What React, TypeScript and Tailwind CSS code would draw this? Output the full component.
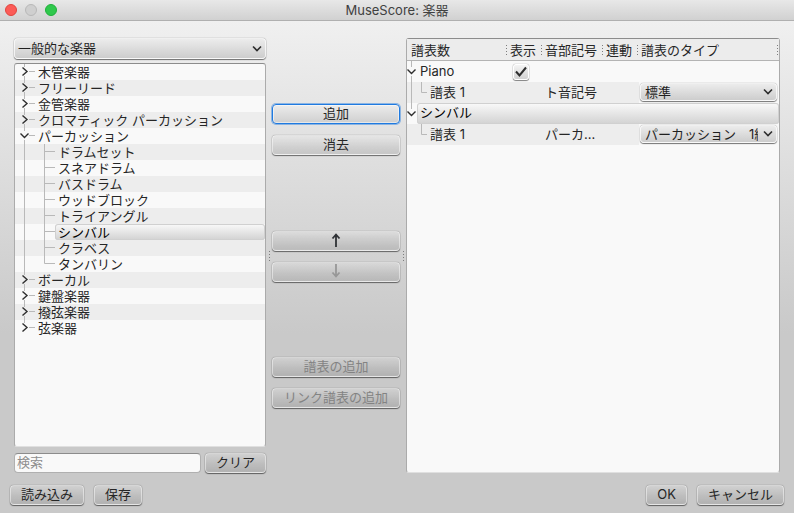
import type { ReactNode } from "react";
import clsx from "clsx";

interface Instrument {
    name: string;
    children?: string[];
}

const INSTRUMENTS: Instrument[] = [
    { name: "木管楽器" },
    { name: "フリーリード" },
    { name: "金管楽器" },
    { name: "クロマティック パーカッション" },
    {
        name: "パーカッション",
        children: [
            "ドラムセット",
            "スネアドラム",
            "バスドラム",
            "ウッドブロック",
            "トライアングル",
            "シンバル",
            "クラベス",
            "タンバリン",
        ],
    },
    { name: "ボーカル" },
    { name: "鍵盤楽器" },
    { name: "撥弦楽器" },
    { name: "弦楽器" },
];

const SELECTED = "シンバル";

const BUTTON =
    "h-5 rounded-[4px] border border-white/45 bg-linear-to-b from-white/15 to-black/10 px-2.5 pb-0.5 text-[13px] leading-4 text-[#262626] whitespace-nowrap shadow-[0_1px_1px_rgba(0,0,0,0.5),0_0_1px_rgba(0,0,0,0.5)] disabled:text-[#838383]";

const BUTTON_FOCUSED =
    "h-5 rounded-[4px] border border-[#1f7ae0] bg-linear-to-b from-[#ececec] to-[#cfcfcf] px-2.5 pb-0.5 text-[13px] leading-4 text-[#262626] whitespace-nowrap ring-1 ring-[#1f7ae0]/45 inset-ring inset-ring-white/50";

function Button({ children, className, disabled, focused, label }: {
    children: ReactNode;
    className?: string;
    disabled?: boolean;
    focused?: boolean;
    label?: string;
}) {
    return (
        <button
            type="button"
            disabled={disabled}
            aria-label={label}
            className={clsx(focused ? BUTTON_FOCUSED : BUTTON, className)}
        >
            {children}
        </button>
    );
}

function Dots() {
    return (
        <svg width="3" height="10" viewBox="0 0 3 10" className="shrink-0" aria-hidden="true">
            {[0, 3, 6, 9].map((y) => (
                <rect key={y} x="1" y={y} width="1" height="1" fill="#7d7d7d" />
            ))}
        </svg>
    );
}

function Splitter() {
    return (
        <div role="separator" aria-orientation="vertical" className="flex w-1.5 shrink-0 items-center justify-center">
            <Dots />
        </div>
    );
}

function ComboBox({ label, options, small }: { label: string; options: string[]; small?: boolean }) {
    return (
        <div className="relative">
            <select
                aria-label={label}
                className={clsx(
                    "block w-full appearance-none overflow-hidden rounded-[4px] border border-white/70 bg-linear-to-b from-[#ececec] to-[#cdcdcd] pr-[18px] text-[13px] leading-4 text-[#1f1f1f] shadow-[0_1px_1px_rgba(0,0,0,0.5),0_0_1px_rgba(0,0,0,0.6)]",
                    small ? "h-[18px] pl-1" : "h-[21px] pb-0.5 pl-[3px]"
                )}
            >
                {options.map((o) => (
                    <option key={o}>{o}</option>
                ))}
            </select>
            <svg
                width="10"
                height="7"
                viewBox="0 0 10 7"
                className="pointer-events-none absolute top-1/2 right-1 -translate-y-1/2"
                aria-hidden="true"
            >
                <path d="M1 1l4 4 4-4" fill="none" stroke="#2e2e2e" strokeWidth="1.6" />
            </svg>
        </div>
    );
}

/* Trunk line with an expand arrow for top level rows */
function RootBranch({ open, last }: { open: boolean; last: boolean }) {
    return (
        <svg width="20" height="16" viewBox="0 0 20 16" className="shrink-0" fill="none" aria-hidden="true">
            <path d={last ? "M9.5 0v3M14 7.5h6" : "M9.5 0v3M9.5 12v4M14 7.5h6"} stroke="#b9b9b9" />
            <path d={open ? "M5.5 5.5l4 4 4-4" : "M7.5 3.5l4.5 4-4.5 4"} stroke="#2e2e2e" strokeWidth="1.4" />
        </svg>
    );
}

function ChildBranch({ last }: { last: boolean }) {
    return (
        <svg width="40" height="16" viewBox="0 0 40 16" className="shrink-0" fill="none" aria-hidden="true">
            <path d={last ? "M9.5 0v16M29.5 0v7.5H40" : "M9.5 0v16M29.5 0v16M29.5 7.5H40"} stroke="#b9b9b9" />
        </svg>
    );
}

function InstrumentTree() {
    const rows = INSTRUMENTS.flatMap((item, i) => [
        {
            name: item.name,
            level: 1,
            branch: <RootBranch open={!!item.children} last={i === INSTRUMENTS.length - 1} />,
        },
        ...(item.children ?? []).map((name, j, all) => ({
            name,
            level: 2,
            branch: <ChildBranch last={j === all.length - 1} />,
        })),
    ]);

    return (
        <ul
            role="tree"
            aria-label="楽器"
            className="mt-1 flex-1 rounded-[3px] border border-[#ababab] border-t-[#8c8c8c] border-b-[#e0e0e0] bg-[#f9f9f9]"
        >
            {rows.map((row) => (
                <li
                    key={row.name}
                    role="treeitem"
                    aria-level={row.level}
                    aria-selected={row.name === SELECTED}
                    className="flex h-4 items-center even:bg-[#ededed]"
                >
                    {row.branch}
                    <span
                        className={clsx(
                            "h-4 flex-1 pl-[3px] leading-4 whitespace-nowrap",
                            row.name === SELECTED &&
                                "rounded-[3px] bg-linear-to-b from-[#fafafa] to-[#d2d2d2] text-black inset-ring inset-ring-[#d0d0d0]"
                        )}
                    >
                        {row.name}
                    </span>
                </li>
            ))}
        </ul>
    );
}

function PartBranch({ first }: { first?: boolean }) {
    return (
        <svg width="10" height="21" viewBox="0 0 10 21" className="shrink-0" fill="none" aria-hidden="true">
            <path d={first ? "M4.5 0v6M4.5 15v6" : "M4.5 0v6"} stroke="#b9b9b9" />
            <path d="M.5 8.5l4 4 4-4" stroke="#2e2e2e" strokeWidth="1.4" />
        </svg>
    );
}

function StaffBranch({ trunk }: { trunk?: boolean }) {
    return (
        <svg width="20" height="21" viewBox="0 0 20 21" className="shrink-0" fill="none" aria-hidden="true">
            <path d={trunk ? "M4.5 0v21M14.5 0v10.5H20" : "M14.5 0v10.5H20"} stroke="#b9b9b9" />
        </svg>
    );
}

function StaffRow({ clef, trunk, type }: { clef: string; trunk?: boolean; type: string }) {
    return (
        <tr className="h-[21px] bg-[#ededed]">
            <td className="p-0">
                <div className="flex items-center">
                    <StaffBranch trunk={trunk} />
                    <span className="pb-0.5 pl-[3px]">譜表 1</span>
                </div>
            </td>
            <td className="p-0" />
            <td className="p-0 pb-0.5 pl-0.5 whitespace-nowrap">{clef}</td>
            <td className="p-0" />
            <td className="bg-[#f9f9f9] p-0 pr-0.5 pb-0.5 pl-px">
                <ComboBox label="譜表のタイプ" options={[type]} small />
            </td>
        </tr>
    );
}

const COLUMNS = [
    { title: "譜表数", width: "w-[101px]" },
    { title: "表示", width: "w-[35px]" },
    { title: "音部記号", width: "w-[61px]" },
    { title: "連動", width: "w-[35px]" },
    { title: "譜表のタイプ", width: "" },
];

function PartTable() {
    return (
        <div className="min-w-0 flex-1 rounded-[3px] border border-[#ababab] border-t-[#8c8c8c] border-b-[#e0e0e0] bg-[#f9f9f9]">
            <table className="w-full table-fixed border-separate border-spacing-0 leading-4">
                <thead>
                    <tr className="h-[22px] bg-[#ececec]">
                        {COLUMNS.map((col, i) => (
                            <th
                                key={col.title}
                                scope="col"
                                className={clsx("border-b border-[#b4b4b4] p-0 text-left font-normal whitespace-nowrap", col.width)}
                            >
                                <div className={clsx("flex items-center justify-between", i === 0 ? "pl-1" : "pl-0.5")}>
                                    {col.title}
                                    <Dots />
                                </div>
                            </th>
                        ))}
                    </tr>
                </thead>
                <tbody>
                    <tr className="h-[21px]">
                        <td className="p-0">
                            <div className="flex items-center">
                                <PartBranch first />
                                <span className="pb-0.5 pl-[3px]">Piano</span>
                            </div>
                        </td>
                        <td className="p-0 pl-[5px]">
                            <label className="relative block size-4">
                                <input
                                    type="checkbox"
                                    defaultChecked
                                    aria-label="表示"
                                    className="peer block size-4 appearance-none rounded-[3px] border border-white bg-linear-to-b from-[#f4f4f4] to-[#d2d2d2] shadow-[0_1px_1px_rgba(0,0,0,0.45),0_0_1px_rgba(0,0,0,0.6)]"
                                />
                                <svg
                                    viewBox="0 0 16 16"
                                    className="pointer-events-none absolute inset-0 hidden peer-checked:block"
                                    aria-hidden="true"
                                >
                                    <path d="M3 7.5l3.5 4 6.5-8" fill="none" stroke="#2e2e2e" strokeWidth="2" />
                                </svg>
                            </label>
                        </td>
                        <td className="p-0" colSpan={3} />
                    </tr>
                    <StaffRow clef="ト音記号" trunk type="標準" />
                    <tr className="h-[21px]" aria-selected="true">
                        <td className="p-0" colSpan={5}>
                            <div className="flex items-center">
                                <PartBranch />
                                <span className="h-[21px] flex-1 rounded-[3px] bg-linear-to-b from-[#fafafa] to-[#d2d2d2] pl-[3px] leading-[19px] text-black inset-ring inset-ring-[#d0d0d0]">
                                    シンバル
                                </span>
                            </div>
                        </td>
                    </tr>
                    <StaffRow clef="パーカ..." type="パーカッション　1線" />
                </tbody>
            </table>
        </div>
    );
}

export default function App() {
    return (
        <div className="flex min-h-screen flex-col bg-linear-to-b from-[#f0f0f0] from-4% via-[#c9c9c9] via-65% to-[#c9c9c9] font-[Inter,'Noto_Sans_CJK_JP',sans-serif] text-[13px] text-[#262626]">
            <header className="flex h-[21px] items-center border-b border-[#b0b0b0] bg-linear-to-b from-[#e8e8e8] to-[#d1d1d1] px-[5px]">
                <div className="flex flex-1 gap-2">
                    <button type="button" aria-label="閉じる" className="size-3 rounded-full border border-[#e0443e] bg-[#fc5b57]" />
                    <button type="button" aria-label="しまう" className="size-3 rounded-full border border-[#b8b8b8] bg-[#cfcfcf]" />
                    <button type="button" aria-label="拡大" className="size-3 rounded-full border border-[#1fb03a] bg-[#2fc84c]" />
                </div>
                <h1 className="leading-5 text-[#404040]">MuseScore: 楽器</h1>
                <div className="flex-1" />
            </header>

            <main className="flex flex-1 pt-[17px] pr-3.5 pb-3 pl-3.5">
                {/* Instrument list */}
                <section className="flex w-[252px] shrink-0 flex-col">
                    <ComboBox label="楽器のジャンル" options={["一般的な楽器"]} />
                    <InstrumentTree />
                    <div className="mt-1.5 flex gap-1">
                        <input
                            type="text"
                            placeholder="検索"
                            aria-label="検索"
                            className="h-5 min-w-0 flex-1 rounded-[4px] border border-[#b0b0b0] border-t-[#8c8c8c] bg-[#f9f9f9] px-0.5 pb-0.5 text-[13px] leading-4 placeholder:text-[#8e8e8e]"
                        />
                        <Button>クリア</Button>
                    </div>
                </section>

                <Splitter />

                {/* Actions */}
                <section className="flex w-32 shrink-0 flex-col gap-[11px] pt-[66px]">
                    <Button focused>追加</Button>
                    <Button>消去</Button>
                    <Button className="mt-[65px] flex items-center justify-center" label="上へ">
                        <svg width="10" height="14" viewBox="0 0 10 14" fill="none" aria-hidden="true">
                            <path d="M5 14V2M1.5 5.5L5 1.5l3.5 4" stroke="#2f3236" strokeWidth="1.8" />
                        </svg>
                    </Button>
                    <Button className="flex items-center justify-center" label="下へ" disabled>
                        <svg width="10" height="14" viewBox="0 0 10 14" fill="none" aria-hidden="true">
                            <path d="M5 0v12M1.5 8.5l3.5 4 3.5-4" stroke="#979797" strokeWidth="1.8" />
                        </svg>
                    </Button>
                    <Button className="mt-16" disabled>譜表の追加</Button>
                    <Button disabled>リンク譜表の追加</Button>
                </section>

                <Splitter />

                <PartTable />
            </main>

            <footer className="flex justify-between px-2.5 pb-2">
                <div className="flex gap-2.5">
                    <Button>読み込み</Button>
                    <Button>保存</Button>
                </div>
                <div className="flex gap-2.5">
                    <Button>OK</Button>
                    <Button>キャンセル</Button>
                </div>
            </footer>
        </div>
    );
}
